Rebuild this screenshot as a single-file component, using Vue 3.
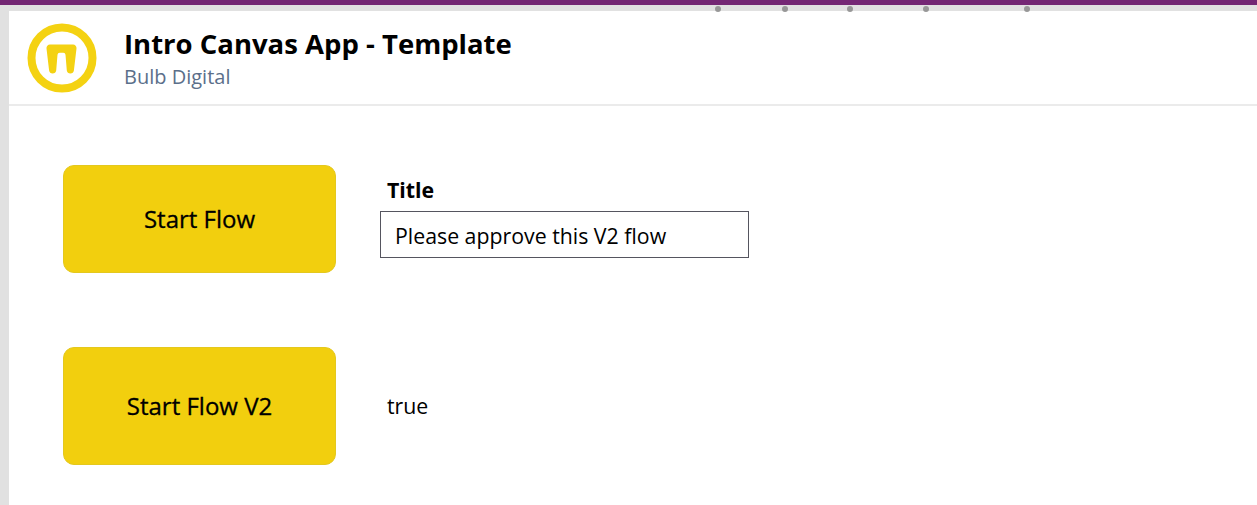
<script setup>
const dots = [718, 785, 850, 926, 1027];
</script>

<template>
  <div class="app">
    <div class="topbar"></div>
    <div class="frame">
      <span v-for="x in dots" :key="x" class="dot" :style="{ left: x - 3 + 'px' }"></span>
      <div class="screen">
        <header class="header">
          <svg class="logo" width="70" height="70" viewBox="0 0 70 70">
            <circle cx="35" cy="35" r="30.5" fill="none" stroke="#f4d212" stroke-width="8" />
            <path
              d="M24 21.5h22a3.5 3.5 0 0 1 3.5 3.9l-2.6 22a3.6 3.6 0 0 1-7.1 0l-1.3-15.6a2.2 2.2 0 0 0-2.2-2h-3.6a2.2 2.2 0 0 0-2.2 2l-1.3 15.6a3.6 3.6 0 0 1-7.1 0l-2.6-22a3.5 3.5 0 0 1 3.5-3.9z"
              fill="#f4d212"
            />
          </svg>
          <div class="heading">
            <div class="app-title">Intro Canvas App - Template</div>
            <div class="app-sub">Bulb Digital</div>
          </div>
        </header>
        <main class="content">
          <section class="row row-first">
            <button class="flow-btn">Start Flow</button>
            <div class="field">
              <label class="field-label">Title</label>
              <div class="field-input">Please approve this V2 flow</div>
            </div>
          </section>
          <section class="row row-second">
            <button class="flow-btn tall">Start Flow V2</button>
            <span class="result">true</span>
          </section>
        </main>
      </div>
    </div>
  </div>
</template>

<style>
html,
body {
  margin: 0;
  background: #fff;
  overflow: hidden;
}
</style>

<style scoped>
.app {
  height: 505px;
  display: flex;
  flex-direction: column;
  font-family: "Open Sans", "Noto Sans", sans-serif;
  color: #000;
}

.topbar {
  height: 5px;
  background: #742774;
}

.frame {
  position: relative;
  flex: 1;
  padding: 6px 0 0 9px;
  background: #e1e1e1;
}

.dot {
  position: absolute;
  top: 1px;
  width: 6px;
  height: 6px;
  border-radius: 50%;
  background: #979797;
}

.screen {
  height: 100%;
  background: #fff;
}

.header {
  height: 93px;
  display: flex;
  align-items: center;
  gap: 27px;
  padding-left: 18px;
  border-bottom: 2px solid #ebebeb;
}

.logo {
  flex: none;
  margin-top: 1px;
}

.app-title {
  font-size: 27.5px;
  font-weight: 700;
  line-height: 38px;
}

.app-sub {
  font-size: 20px;
  line-height: 27px;
  color: #5b6f8a;
}

.content {
  padding: 59px 0 0 54px;
}

.row {
  display: flex;
  align-items: center;
  gap: 44px;
}

.row-second {
  margin-top: 74px;
}

.flow-btn {
  width: 273px;
  height: 108px;
  padding: 0 0 2px;
  border: 1px solid #e4c81e;
  border-radius: 11px;
  background: #f2cf0e;
  font: 400 24px "Open Sans", sans-serif;
  -webkit-text-stroke: 0.3px #000;
  color: #000;
}

.flow-btn.tall {
  height: 118px;
}

.field {
  display: flex;
  flex-direction: column;
  margin-top: -4px;
}

.field-label {
  padding-left: 7px;
  font-size: 21.3px;
  font-weight: 700;
  line-height: 28px;
  margin-bottom: 7px;
}

.field-input {
  box-sizing: border-box;
  width: 369px;
  height: 47px;
  padding-left: 14px;
  border: 1px solid #55555f;
  font-size: 21.3px;
  line-height: 47px;
}

.result {
  padding-left: 7px;
  margin-top: -2px;
  font-size: 21.3px;
}
</style>
